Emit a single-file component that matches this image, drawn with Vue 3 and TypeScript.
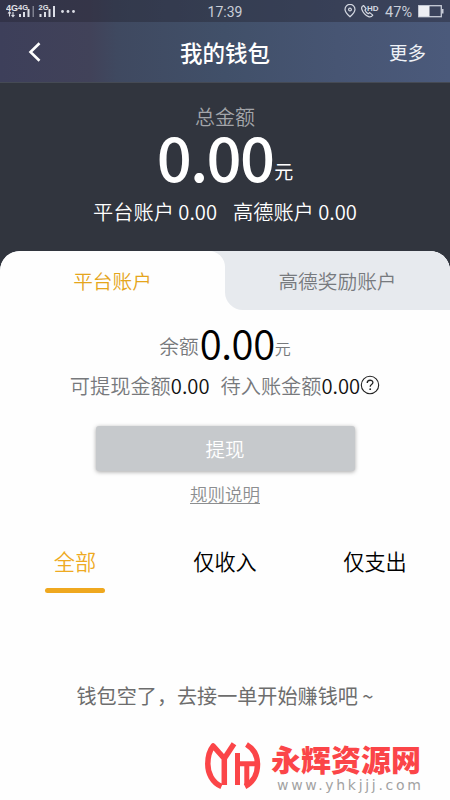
<script setup lang="ts">
import { ref } from 'vue'

const total = ref('0.00')
const accounts = ref<string[]>(['平台账户 0.00', '高德账户 0.00'])
const filters: string[] = ['全部', '仅收入', '仅支出']
const active = ref(0)
</script>

<template>
  <div class="screen">
    <header class="top">
      <div class="status">
        <svg class="signals" width="76" height="22" viewBox="0 0 76 22">
          <g class="net">
            <text x="0" y="11">4G</text>
            <text x="12" y="10" class="tiny">4G</text>
            <text x="32.500" y="10" class="tiny">2G</text>
          </g>
          <g fill="none" stroke="#dcdee6" stroke-width="1.1">
            <path d="M3.500 12v4.500M2 13.500l1.500-1.700L5 13.500M7 12v4.500M5.500 15l1.500 1.700L8.500 15" />
          </g>
          <g fill="#dcdee6">
            <path d="M13 14h2v3h-2zM17 12h2v5h-2zM21.500 9h2v8h-2zM33.500 14h2v3h-2zM38 12h2v5h-2zM42.500 9h2v8h-2zM47 6h2v11h-2z" />
            <path d="M26.500 6h1.500v11h-1.500z" opacity=".45" />
            <circle cx="56.500" cy="11.500" r="1.400" /><circle cx="62" cy="11.500" r="1.400" /><circle cx="67.500" cy="11.500" r="1.400" />
          </g>
        </svg>
        <span class="time">17:39</span>
        <div class="status-right">
          <svg width="12" height="14" viewBox="0 0 12 14" fill="none" stroke="#d5d9e2" stroke-width="1.200">
            <path d="M6 12.800C3 10 1 7.800 1 5.400a5 5 0 0 1 10 0C11 7.800 9 10 6 12.800z" /><circle cx="6" cy="5.600" r="1.400" />
          </svg>
          <svg class="call" width="20" height="16" viewBox="0 0 20 16">
            <path d="M3.500 2.500C1.800 3.300 1.200 4.800 2 6.800c1.200 3.200 3.600 5.600 6.600 6.800 1.800.7 3.100.1 4.200-1.500L9.700 9.600 8.200 10.700C6.700 9.900 5.600 8.700 4.900 7.100L6.100 5.700z" fill="none" stroke="#d5d9e2" stroke-width="1.200" stroke-linejoin="round" />
            <text x="7" y="7.800" class="hd">HD</text>
          </svg>
          <span class="percent">47%</span>
          <svg width="26" height="13" viewBox="0 0 26 13">
            <rect x=".7" y=".7" width="22.600" height="11" fill="none" stroke="#c8ccd8" stroke-width="1.300" />
            <path d="M1 1h10.500v10.500H1z" fill="#edeef3" /><path d="M24 4h1.500v4.500H24z" fill="#c8ccd8" />
          </svg>
        </div>
      </div>
      <nav class="nav">
        <svg class="back" width="14" height="22" viewBox="0 0 14 22"><path d="M11.500 2.200 2.500 11l9 8.800" fill="none" stroke="#fff" stroke-width="2.600" /></svg>
        <h1>我的钱包</h1>
        <span class="more">更多</span>
      </nav>
    </header>

    <section class="hero">
      <div class="hero-label">总金额</div>
      <div class="hero-amount"><b>{{ total }}</b><span>元</span></div>
      <div class="hero-accounts"><span v-for="a in accounts" :key="a">{{ a }}</span></div>
    </section>

    <div class="tabs-wrap">
      <div class="tabs">
        <div class="tab on">平台账户</div>
        <div class="tab off"><span>高德奖励账户</span></div>
      </div>
    </div>

    <main class="panel">
      <div class="balance"><span>余额</span><b>0.00</b><i>元</i></div>
      <div class="detail">
        <span>可提现金额<em>0.00</em></span>
        <span>待入账金额<em>0.00</em></span>
        <svg width="20" height="20" viewBox="0 0 20 20"><circle cx="10" cy="10" r="8.700" fill="none" stroke="#222" stroke-width="1.100" /><path d="M7.200 8c0-3.700 5.700-3.500 5.700-.5 0 2-2.700 2.100-2.700 4.200" fill="none" stroke="#222" stroke-width="1.300" /><circle cx="10.200" cy="14.200" r=".9" fill="#222" /></svg>
      </div>
      <button class="withdraw">提现</button>
      <a class="rules">规则说明</a>
      <div class="filters">
        <div v-for="(f, i) in filters" :key="f" class="filter" :class="{ active: i === active }" @click="active = i">{{ f }}</div>
      </div>
      <p class="empty">钱包空了，去接一单开始赚钱吧 ~</p>
    </main>

    <footer class="brand">
      <svg width="60" height="52" viewBox="0 0 60 52" fill="none" stroke="#fb4548" stroke-width="5.500" stroke-linejoin="round">
        <path d="M18.500 46.500C9 42.500 4.800 33 4.800 24 4.800 16.500 6.500 10.500 10.200 6L21.300 18.500V45" />
        <path d="M21.300 18.500 31 3.800" />
        <path d="M34.500 13v32M43.800 22v23M34.500 23.800h19" stroke-width="5" />
        <path d="M43.500 4.500C51 9 54.500 16 54.500 24.500c0 9.500-4.500 18-12.500 22" />
      </svg>
      <div class="brand-text">
        <strong>永辉资源网</strong>
        <small>www.yhkjjj.com</small>
      </div>
    </footer>
  </div>
</template>

<style>
body { margin: 0; background: #fefefe; }
</style>

<style scoped>
.screen { width: 450px; height: 800px; overflow: hidden; display: flex; flex-direction: column; background: #fefefe; font-family: "Noto Sans CJK SC", sans-serif; font-weight: 350; }
.top { height: 83px; flex: none; box-sizing: border-box; border-bottom: 1px solid #454a54; background: linear-gradient(90deg, #3d3f5a 0%, #414259 20%, #3f4960 26%, #415069 50%, #475573 75%, #4b5a7b 100%); }
.status { height: 22px; display: grid; grid-template-columns: 1fr auto 1fr; align-items: center; background: rgba(38, 38, 50, .43); color: #c9ced8; }
.signals { margin-left: 6px; }
.net { font: 700 9px "Liberation Sans", sans-serif; fill: #e2e4eb; }
.tiny { font-size: 7.500px; }
.time { font: 400 14px/20px Roboto, sans-serif; padding-top: 2px; }
.status-right { display: flex; align-items: center; justify-content: flex-end; padding-right: 6px; }
.call { margin-left: 4px; }
.hd { font: 700 8px "Liberation Sans", sans-serif; fill: #d5d9e2; }
.percent { font: 400 14.500px/19px Roboto, sans-serif; padding-top: 3px; margin: 0 6px 0 5px; }
.nav { height: 60px; display: grid; grid-template-columns: 1fr auto 1fr; align-items: center; color: #fff; }
.back { margin-left: 28px; }
.nav h1 { margin: 0; font-size: 22.500px; font-weight: 500; line-height: 30px; }
.more { justify-self: end; margin-right: 24px; font-size: 18.500px; font-weight: 400; color: #eef1f6; }
.hero { height: 168px; flex: none; display: flex; flex-direction: column; align-items: center; background: #31353e; color: #fff; }
.hero-label { margin-top: 19px; font-size: 20px; line-height: 30px; color: #a3a5aa; }
.hero-amount { height: 60px; display: flex; justify-content: center; line-height: 47px; }
.hero-amount b { font-size: 61.500px; font-weight: 500; letter-spacing: -1.700px; }
.hero-amount span { font-size: 19px; font-weight: 400; line-height: 77px; margin-left: 1px; }
.hero-accounts { display: flex; gap: 16px; font-size: 20.200px; line-height: 30px; margin-top: 5px; }
.tabs-wrap { height: 59px; flex: none; background: #31353e; }
.tabs { height: 59px; display: flex; border-radius: 20px 20px 0 0; overflow: hidden; background: #e7eaee; }
.tab { font-size: 19.700px; line-height: 60px; text-align: center; height: 59px; }
.tab.on { width: 225px; color: #e5a51b; background: #fefefe; border-top-right-radius: 16px; }
.tab.off { width: 225px; background: #fefefe; }
.tab.off span { display: block; height: 59px; background: #e7eaee; border-bottom-left-radius: 18px; color: #777a7e; }
.panel { display: flex; flex-direction: column; align-items: center; }
.balance { height: 60px; margin-top: 5px; display: flex; justify-content: center; color: #77797c; font-size: 19.700px; line-height: 60px; }
.balance span { line-height: 62px; padding-right: 1px; }
.balance b { font-size: 40px; font-weight: 350; color: #000; line-height: 55px; letter-spacing: -.4px; }
.balance i { font-size: 16px; font-style: normal; line-height: 67px; }
.detail { display: flex; align-items: center; height: 30px; margin-top: -5px; font-size: 20.200px; color: #77797c; }
.detail span + span { margin-left: 11px; }
.detail em { font-style: normal; color: #111; }
.withdraw { width: 259px; height: 45px; margin-top: 26px; padding: 0; border: 0; border-radius: 3px; background: #c6c9cc; box-shadow: 0 1px 4px rgba(0, 0, 0, .35); color: #fff; font: 350 19.500px/45px "Noto Sans CJK SC", sans-serif; }
.rules { margin-top: 9px; font-size: 17.500px; line-height: 28px; color: #8c8e90; text-decoration: underline; text-underline-offset: 2px; text-decoration-thickness: 1px; }
.filters { width: 450px; display: grid; grid-template-columns: repeat(3, 1fr); margin-top: 38px; }
.filter { display: flex; flex-direction: column; align-items: center; font-size: 21.200px; line-height: 30px; color: #000; }
.filter.active { color: #eeaa22; }
.filter.active::after { content: ""; width: 60px; height: 5px; margin-top: 12px; border-radius: 3px; background: #efa81f; }
.empty { margin: 88px 0 0; font-size: 20.100px; font-weight: 400; line-height: 30px; color: #6d6d6d; }
.brand { margin-top: auto; height: 62px; flex: none; display: flex; padding-left: 203px; }
.brand svg { margin-top: 2px; }
.brand-text { display: flex; flex-direction: column; margin-left: 8px; }
.brand strong { font-size: 30px; line-height: 40px; font-weight: 900; color: #fb4548; }
.brand small { font: 400 14px/16px "DejaVu Sans", sans-serif; letter-spacing: 2.700px; color: #a2a2a2; margin: -1px 0 0 6px; }
</style>
